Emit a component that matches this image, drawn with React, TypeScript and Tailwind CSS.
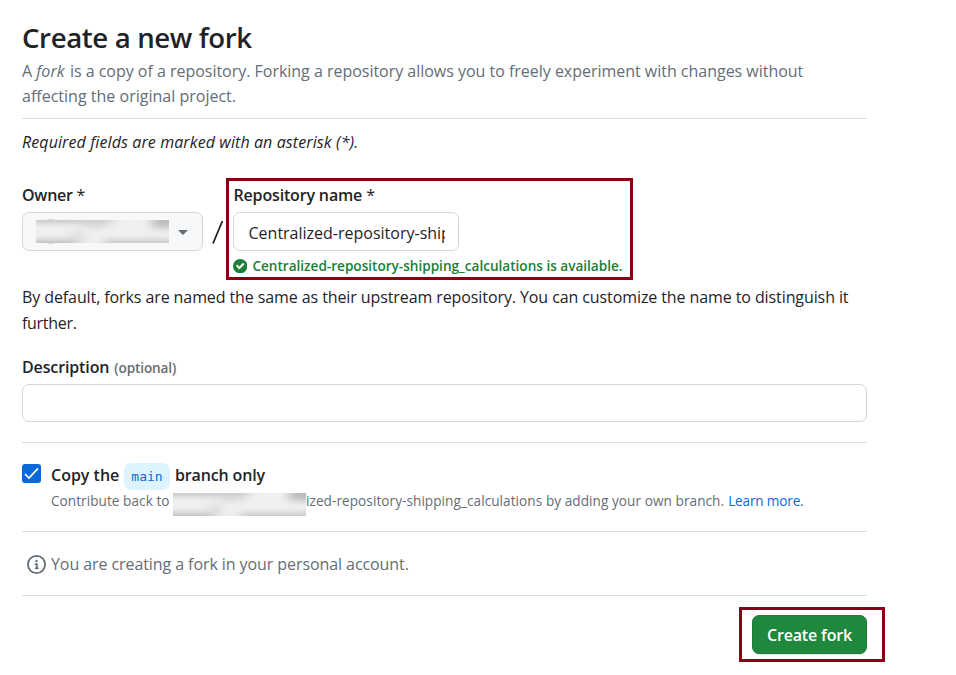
function Redacted({ className = "" }: { className?: string }) {
  return (
    <svg className={"block h-[23px] w-[133px] shrink-0 " + className} viewBox="0 0 133 23">
      <defs>
        <filter id="soft" x="-30%" y="-100%" width="160%" height="300%">
          <feGaussianBlur stdDeviation="6 3" />
        </filter>
      </defs>
      <rect width="133" height="23" fill="#f0f0f0" />
      <g filter="url(#soft)">
        <rect x="-20" y="-12" width="96" height="15" fill="#c4c4c4" />
        <rect x="48" y="0" width="22" height="8" fill="#d6d6d6" />
        <rect x="116" y="-12" width="44" height="20" fill="#bcbcbc" />
        <rect x="-20" y="20" width="62" height="14" fill="#bcbcbc" />
        <rect x="36" y="11" width="11" height="12" fill="#dadada" />
        <rect x="68" y="20" width="90" height="14" fill="#c4c4c4" />
      </g>
    </svg>
  );
}

function Divider({ className = "" }: { className?: string }) {
  return <div className={"h-px bg-[#d8dce3] " + className} />;
}

export default function App() {
  return (
    <div className="h-[675px] w-[956px] overflow-hidden bg-white pl-[22px] pt-[18px] font-['Open_Sans','Noto_Sans',sans-serif] text-base text-[#1f2328]">
      <main className="flex w-[845px] flex-col whitespace-nowrap">
        <h1 className="h-[41px] text-[27.6px] font-semibold leading-[38px] tracking-[-0.37px]">Create a new fork</h1>
        <p className="leading-[25px] tracking-[-0.02px] text-[#656d76]">
          A <em className="mr-px tracking-[0.1px]">fork</em> is a copy of a repository. Forking a repository allows you to freely experiment with changes without
          <br />
          <span className="tracking-[0.01px]">affecting the original project.</span>
        </p>
        <Divider className="mt-[9px]" />
        <p className="mt-[10px] h-[26px] italic leading-[26px] tracking-[0.1px]">Required fields are marked with an asterisk (*).</p>

        <div className="mt-[27px] flex h-[92px]">
          <div className="w-[181px]">
            <label className="block h-[30px] font-semibold leading-[27px] tracking-[-0.25px]">
              Owner <span className="font-normal">*</span>
            </label>
            <button className="flex h-[39px] w-full items-center rounded-[7px] border border-[#d3d7dc] bg-[#f6f8fa] pl-[13px]">
              <span className="relative">
                <span className="absolute left-[2px] top-[-1px] size-[25px] rounded-full bg-[#d5d8da]" />
                <Redacted className="relative" />
              </span>
              <span className="ml-[9px] mt-px border-x-[5px] border-t-[5px] border-x-transparent border-t-[#656d76]" />
            </button>
          </div>
          <svg className="ml-[9px] mt-[37px] h-[26px] w-[12px]" viewBox="0 0 12 26" stroke="#1f2328" strokeWidth="1.8">
            <path d="M1 24.5 10.4 2" />
          </svg>
          <div className="relative ml-[9px]">
            <div className="absolute left-[-7px] top-[-4px] h-[102px] w-[407px] border-[3px] border-[#880015]" />
            <label className="block h-[30px] pl-[0.5px] font-semibold leading-[27px] tracking-[-0.16px]">
              Repository name <span className="font-normal">*</span>
            </label>
            <div className="h-[39px] w-[226px] rounded-[7px] border border-[#d0d7de] bg-white pl-[14px] pr-[13px]">
              <div className="h-full overflow-hidden pl-[0.5px] leading-[40px]">Centralized-repository-shipping_calculations</div>
            </div>
            <div className="mt-[5px] flex h-[20px] items-center text-[13.6px] font-semibold leading-[20px] text-[#1a7f37]">
              <svg className="mr-[5px] size-[14.4px]" viewBox="0 0 12 12" fill="#1a7f37">
                <path fillRule="evenodd" d="M6 0a6 6 0 1 1 0 12A6 6 0 0 1 6 0Zm-.705 8.737L9.63 4.403 8.392 3.166 5.295 6.263l-1.7-1.702L2.356 5.8l2.938 2.938Z" />
              </svg>
              <span className="tracking-[-0.01px]">Centralized-repository-shipping_calculations is available.</span>
            </div>
          </div>
        </div>

        <p className="mt-[10px] leading-[26px]">
          <span className="tracking-[-0.095px]">By default, forks are named the same as their upstream repository. You can customize the name to distinguish it</span>
          <br />
          <span className="tracking-[-0.3px]">further.</span>
        </p>

        <label className="mt-[18px] h-[30px] font-semibold leading-[26px] tracking-[-0.13px]">
          Description <span className="ml-px text-[13.6px] text-[#656d76]">(optional)</span>
        </label>
        <div className="h-[38px] rounded-[7px] border border-[#d0d7de] bg-white" />
        <Divider className="mt-[20px]" />

        <div className="mt-[19px] flex h-[69px]">
          <span className="mt-[2px] flex size-[19px] items-center justify-center rounded-[3px] bg-[#0969da]">
            <svg className="size-[15px]" viewBox="0 0 15 15" fill="none" stroke="#fff" strokeWidth="1.7">
              <path d="m1 8 4 4 9-9.6" />
            </svg>
          </span>
          <div className="ml-[10px]">
            <div className="flex h-[28px] items-start font-semibold leading-[26px]">
              <span className="w-[73px]">Copy the</span>
              <span className="mt-[1px] flex h-[27px] w-[46px] items-center justify-center rounded-[7px] bg-[#ddf4ff] font-['DejaVu_Sans_Mono',monospace] text-[13px] font-normal text-[#0969da]">main</span>
              <span className="ml-[5px] tracking-[-0.15px]">branch only</span>
            </div>
            <div className="flex text-[13.6px] leading-[22px] text-[#656d76]">
              <span className="w-[122px] tracking-[0.05px]">Contribute back to</span>
              <Redacted className="mt-[3px]" />
              <span className="tracking-[0.06px]">ized-repository-shipping_calculations by adding your own branch.</span>
              <a className="ml-[4px] tracking-[-0.17px] text-[#0969da]">Learn more.</a>
            </div>
          </div>
        </div>
        <Divider />

        <div className="mt-[19px] flex h-[26px] items-center pl-[5px] text-[#656d76]">
          <svg className="mr-[5px] size-[19px]" viewBox="0 0 16 16" fill="currentColor">
            <path d="M0 8a8 8 0 1 1 16 0A8 8 0 0 1 0 8Zm8-6.5a6.5 6.5 0 1 0 0 13 6.5 6.5 0 0 0 0-13ZM6.5 7.75A.75.75 0 0 1 7.25 7h1a.75.75 0 0 1 .75.75v2.75h.25a.75.75 0 0 1 0 1.5h-2a.75.75 0 0 1 0-1.5h.25v-2h-.25a.75.75 0 0 1-.75-.75ZM8 6a1 1 0 1 1 0-2 1 1 0 0 1 0 2Z" />
          </svg>
          <span className="tracking-[-0.08px]">You are creating a fork in your personal account.</span>
        </div>
        <Divider className="mt-[18px]" />

        <div className="relative mt-[19px] self-end">
          <div className="absolute left-[-13px] top-[-8px] h-[55px] w-[146px] border-[3px] border-[#880015]" />
          <button className="flex h-[39px] w-[115px] items-center justify-center rounded-[7px] border border-[#1e7c38] bg-[#1f883d] font-semibold tracking-[-0.16px] text-white shadow-[0_1px_0_rgba(31,35,40,0.1)]">Create fork</button>
        </div>
      </main>
    </div>
  );
}
